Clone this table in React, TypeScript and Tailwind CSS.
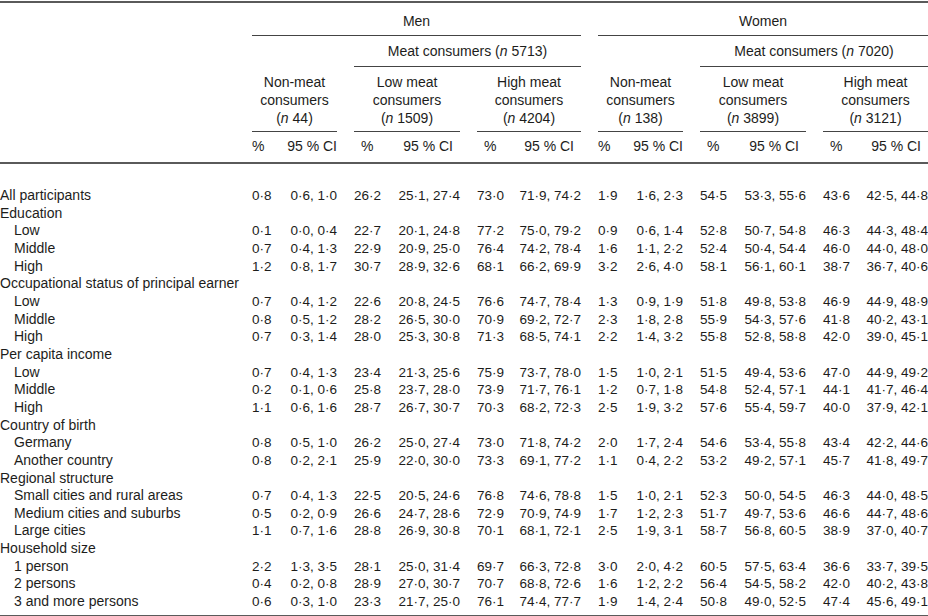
import React from 'react';

// one pair per group: [percent, 95 % CI]
type Row = { label: string; indent?: boolean; values?: string[] };

const rows: Row[] = [
  { label: 'All participants', values: ['0.8', '0.6, 1.0', '26.2', '25.1, 27.4', '73.0', '71.9, 74.2', '1.9', '1.6, 2.3', '54.5', '53.3, 55.6', '43.6', '42.5, 44.8'] },
  { label: 'Education' },
  { label: 'Low', indent: true, values: ['0.1', '0.0, 0.4', '22.7', '20.1, 24.8', '77.2', '75.0, 79.2', '0.9', '0.6, 1.4', '52.8', '50.7, 54.8', '46.3', '44.3, 48.4'] },
  { label: 'Middle', indent: true, values: ['0.7', '0.4, 1.3', '22.9', '20.9, 25.0', '76.4', '74.2, 78.4', '1.6', '1.1, 2.2', '52.4', '50.4, 54.4', '46.0', '44.0, 48.0'] },
  { label: 'High', indent: true, values: ['1.2', '0.8, 1.7', '30.7', '28.9, 32.6', '68.1', '66.2, 69.9', '3.2', '2.6, 4.0', '58.1', '56.1, 60.1', '38.7', '36.7, 40.6'] },
  { label: 'Occupational status of principal earner' },
  { label: 'Low', indent: true, values: ['0.7', '0.4, 1.2', '22.6', '20.8, 24.5', '76.6', '74.7, 78.4', '1.3', '0.9, 1.9', '51.8', '49.8, 53.8', '46.9', '44.9, 48.9'] },
  { label: 'Middle', indent: true, values: ['0.8', '0.5, 1.2', '28.2', '26.5, 30.0', '70.9', '69.2, 72.7', '2.3', '1.8, 2.8', '55.9', '54.3, 57.6', '41.8', '40.2, 43.1'] },
  { label: 'High', indent: true, values: ['0.7', '0.3, 1.4', '28.0', '25.3, 30.8', '71.3', '68.5, 74.1', '2.2', '1.4, 3.2', '55.8', '52.8, 58.8', '42.0', '39.0, 45.1'] },
  { label: 'Per capita income' },
  { label: 'Low', indent: true, values: ['0.7', '0.4, 1.3', '23.4', '21.3, 25.6', '75.9', '73.7, 78.0', '1.5', '1.0, 2.1', '51.5', '49.4, 53.6', '47.0', '44.9, 49.2'] },
  { label: 'Middle', indent: true, values: ['0.2', '0.1, 0.6', '25.8', '23.7, 28.0', '73.9', '71.7, 76.1', '1.2', '0.7, 1.8', '54.8', '52.4, 57.1', '44.1', '41.7, 46.4'] },
  { label: 'High', indent: true, values: ['1.1', '0.6, 1.6', '28.7', '26.7, 30.7', '70.3', '68.2, 72.3', '2.5', '1.9, 3.2', '57.6', '55.4, 59.7', '40.0', '37.9, 42.1'] },
  { label: 'Country of birth' },
  { label: 'Germany', indent: true, values: ['0.8', '0.5, 1.0', '26.2', '25.0, 27.4', '73.0', '71.8, 74.2', '2.0', '1.7, 2.4', '54.6', '53.4, 55.8', '43.4', '42.2, 44.6'] },
  { label: 'Another country', indent: true, values: ['0.8', '0.2, 2.1', '25.9', '22.0, 30.0', '73.3', '69.1, 77.2', '1.1', '0.4, 2.2', '53.2', '49.2, 57.1', '45.7', '41.8, 49.7'] },
  { label: 'Regional structure' },
  { label: 'Small cities and rural areas', indent: true, values: ['0.7', '0.4, 1.3', '22.5', '20.5, 24.6', '76.8', '74.6, 78.8', '1.5', '1.0, 2.1', '52.3', '50.0, 54.5', '46.3', '44.0, 48.5'] },
  { label: 'Medium cities and suburbs', indent: true, values: ['0.5', '0.2, 0.9', '26.6', '24.7, 28.6', '72.9', '70.9, 74.9', '1.7', '1.2, 2.3', '51.7', '49.7, 53.6', '46.6', '44.7, 48.6'] },
  { label: 'Large cities', indent: true, values: ['1.1', '0.7, 1.6', '28.8', '26.9, 30.8', '70.1', '68.1, 72.1', '2.5', '1.9, 3.1', '58.7', '56.8, 60.5', '38.9', '37.0, 40.7'] },
  { label: 'Household size' },
  { label: '1 person', indent: true, values: ['2.2', '1.3, 3.5', '28.1', '25.0, 31.4', '69.7', '66.3, 72.8', '3.0', '2.0, 4.2', '60.5', '57.5, 63.4', '36.6', '33.7, 39.5'] },
  { label: '2 persons', indent: true, values: ['0.4', '0.2, 0.8', '28.9', '27.0, 30.7', '70.7', '68.8, 72.6', '1.6', '1.2, 2.2', '56.4', '54.5, 58.2', '42.0', '40.2, 43.8'] },
  { label: '3 and more persons', indent: true, values: ['0.6', '0.3, 1.0', '23.3', '21.7, 25.0', '76.1', '74.4, 77.7', '1.9', '1.4, 2.4', '50.8', '49.0, 52.5', '47.4', '45.6, 49.1'] },
];

const groups = [
  { title: 'Non-meat', n: '44', inset: false },
  { title: 'Low meat', n: '1509', inset: true },
  { title: 'High meat', n: '4204', inset: true },
  { title: 'Non-meat', n: '138', inset: false },
  { title: 'Low meat', n: '3899', inset: true },
  { title: 'High meat', n: '3121', inset: true },
];

const colStarts = ['col-start-2', 'col-start-3', 'col-start-4', 'col-start-5', 'col-start-6', 'col-start-7'];

const grid = 'grid grid-cols-[235px_85px_106px_104px_85px_106px_105px] gap-x-[17px]';

// decimals in the journal style use a raised dot
const Num = ({ v }: { v: string }) => {
  const parts = v.split('.');
  return (
    <span className="whitespace-nowrap text-[13.5px]">
      {parts.map((p, i) => (
        <React.Fragment key={i}>
          {i > 0 && <span>·</span>}
          {p}
        </React.Fragment>
      ))}
    </span>
  );
};

const App = () => {
  return (
    <div className="w-[928px] h-[616px] bg-white text-[#1d1d1b] text-[14px] font-['Liberation_Sans',Arial,sans-serif] overflow-hidden">
      <div className="mt-px border-t-2 border-[#5a5a5a]">
        {/* Header */}
        <div className={`${grid} border-b-2 border-[#5a5a5a] leading-[18px]`}>
          <div className="col-start-2 col-span-3 row-start-1 text-center pt-[9px] pb-[5px] border-b border-[#444]">Men</div>
          <div className="col-start-5 col-span-3 row-start-1 text-center pt-[9px] pb-[5px] border-b border-[#444]">Women</div>

          <div className="col-start-3 col-span-2 row-start-2 text-center pt-[6px] pb-[6px] border-b border-[#444]">
            Meat consumers (<i>n</i> 5713)
          </div>
          <div className="col-start-6 col-span-2 row-start-2 text-center pt-[6px] pb-[6px] border-b border-[#444]">
            Meat consumers (<i>n</i> 7020)
          </div>

          {groups.map((g, i) => (
            <div key={`h${i}`} className={`${colStarts[i]} row-start-3 text-center pt-[6px] pb-[4px] border-b border-[#444]`}>
              <div>{g.title}</div>
              <div>consumers</div>
              <div>
                (<i>n</i> {g.n})
              </div>
            </div>
          ))}

          {groups.map((g, i) => (
            <div key={`u${i}`} className={`${colStarts[i]} row-start-4 flex justify-between pt-[5px] pb-[7px] ${g.inset ? 'px-[7px]' : ''}`}>
              <span>%</span>
              <span>95 % CI</span>
            </div>
          ))}
        </div>

        {/* Body */}
        <div className="pt-[23px] pb-[4px] border-b-2 border-[#5a5a5a] leading-[17.65px]">
          {rows.map((r, ri) => (
            <div key={ri} className={grid}>
              <div className={`col-start-1 whitespace-nowrap ${r.indent ? 'pl-[14px]' : ''}`}>{r.label}</div>
              {r.values &&
                groups.map((_, gi) => (
                  <div key={gi} className={`${colStarts[gi]} flex justify-between`}>
                    <Num v={r.values![gi * 2]} />
                    <Num v={r.values![gi * 2 + 1]} />
                  </div>
                ))}
            </div>
          ))}
        </div>
      </div>
    </div>
  );
};

export default App;
